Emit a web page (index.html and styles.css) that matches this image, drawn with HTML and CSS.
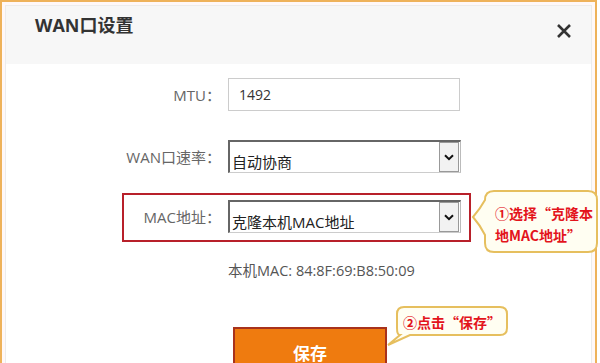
FILE: index.html
```html
<!DOCTYPE html>
<html lang="zh-CN">
<head>
  <meta charset="UTF-8">
  <meta name="viewport" content="width=device-width, initial-scale=1.0">
  <title>WAN口设置</title>
  <link rel="stylesheet" href="styles.css">
</head>
<body>
  <div class="page">
    <div class="dialog">
      <div class="panel">
        <div class="dialog-head">
          <h1 class="dialog-title">WAN口设置</h1>
          <svg class="close" width="16" height="16" viewBox="0 0 16 16">
            <path d="M2 2 L14 14 M14 2 L2 14" stroke="#333" stroke-width="2.6" fill="none"/>
          </svg>
        </div>

        <div class="form">
          <div class="row">
            <label class="row-label">MTU：</label>
            <input type="text" class="text-input" value="1492">
          </div>

          <div class="row row-gap">
            <label class="row-label">WAN口速率：</label>
            <div class="select-box">
              <select class="select">
                <option>自动协商</option>
              </select>
              <span class="select-arrow">
                <svg width="10" height="7" viewBox="0 0 10 7"><path d="M1 1.2 L5 5.2 L9 1.2" stroke="#111" stroke-width="2" fill="none"/></svg>
              </span>
            </div>
          </div>

          <div class="row highlight">
            <label class="row-label">MAC地址：</label>
            <div class="select-box">
              <select class="select">
                <option>克隆本机MAC地址</option>
              </select>
              <span class="select-arrow">
                <svg width="10" height="7" viewBox="0 0 10 7"><path d="M1 1.2 L5 5.2 L9 1.2" stroke="#111" stroke-width="2" fill="none"/></svg>
              </span>
            </div>
          </div>

          <p class="mac-info">本机MAC: 84:8F:69:B8:50:09</p>

          <button class="save">保存</button>
        </div>
      </div>
    </div>

    <div class="callout callout-mac">
      <svg class="callout-shape" width="130" height="65" viewBox="0 0 130 65">
        <path d="M24 2 H118 Q127 2 127 11 V54 Q127 63 118 63 H24 Q15 63 15 54 V46 Q10 36 3 28 Q10 20 15 11 Q15 2 24 2 Z" fill="#fffef2" stroke="#e6bf5e" stroke-width="2"/>
      </svg>
      <div class="callout-text">①选择“克隆本<br>地MAC地址”</div>
    </div>

    <div class="callout callout-save">
      <svg class="callout-shape" width="126" height="44" viewBox="0 0 126 44">
        <path d="M20 2 H116 Q123 2 123 9 V23 Q123 30 116 30 H26 L4 40 L16 30 Q13 30 13 23 V9 Q13 2 20 2 Z" fill="#fffef2" stroke="#e6bf5e" stroke-width="2"/>
      </svg>
      <div class="callout-text">②点击“保存”</div>
    </div>
  </div>
</body>
</html>
```

FILE: styles.css
```css
body {
  margin: 0;
  font-family: "Open Sans", "Noto Sans CJK SC", sans-serif;
  background-color: #fff;
}

.page {
  position: relative;
  width: 600px;
  height: 363px;
  overflow: hidden;
}

.dialog {
  width: 597px;
  height: 380px;
  box-sizing: border-box;
  border: 2px solid #eeb25a;
  padding: 3px 3px 0;
  background: #fff8f8;
}

.panel {
  height: 100%;
  border: 1px solid #ececec;
  background: #fff;
}

.dialog-head {
  height: 58px;
  box-sizing: border-box;
  background: #f7f7f7;
  display: flex;
  justify-content: space-between;
  align-items: flex-start;
  padding: 7px 19px 0 29px;
}

.dialog-title {
  margin: 0;
  font-size: 18px;
  line-height: 24px;
  font-weight: bold;
  color: #333;
}

.close {
  margin-top: 10px;
}

.form {
  padding-top: 14px;
}

.row {
  display: flex;
  align-items: center;
  margin-left: 104px;
}

.row-gap {
  margin-top: 29px;
}

.row-label {
  width: 111px;
  margin-right: 7px;
  text-align: right;
  white-space: nowrap;
  font-size: 15px;
  color: #666;
}

.text-input {
  width: 232px;
  height: 33px;
  box-sizing: border-box;
  border: 1px solid #ccc;
  padding: 0 10px;
  font-family: inherit;
  font-size: 14px;
  color: #333;
}

.select-box {
  display: flex;
  align-items: center;
  width: 233px;
  height: 33px;
  box-sizing: border-box;
  border-top: 2px solid #666;
  border-left: 2px solid #666;
  border-right: 1px solid #bbb;
  border-bottom: 1px solid #ccc;
  background: #fff;
}

.select {
  flex: 1;
  height: 100%;
  appearance: none;
  border: none;
  outline: none;
  background: transparent;
  padding: 10px 0 0 2px;
  font-family: inherit;
  font-size: 15px;
  color: #222;
}

.select-arrow {
  display: flex;
  align-items: center;
  justify-content: center;
  width: 20px;
  height: 30px;
  box-sizing: border-box;
  margin-right: 1px;
  border: 1px solid #999;
  background: #f2f2f2;
}

.highlight {
  margin-top: 20px;
  margin-left: 116px;
  width: 349px;
  box-sizing: border-box;
  border: 2px solid #b8202a;
  padding: 5px 8px 7px 0;
}

  .highlight .row-label {
    width: 97px;
  }

.mac-info {
  margin: 19px 0 0 222px;
  font-size: 14.5px;
  line-height: 20px;
  color: #555;
}

.save {
  display: block;
  margin: 46px 0 0 227px;
  width: 154px;
  height: 50px;
  border: 2px solid #a8321c;
  background: #ef7b0f;
  color: #fff;
  font-family: inherit;
  font-size: 17px;
  font-weight: bold;
}

.callout {
  position: absolute;
}

.callout-shape {
  position: absolute;
  left: 0;
  top: 0;
}

.callout-text {
  position: relative;
  font-family: "Noto Sans CJK SC", sans-serif;
  font-size: 14px;
  font-weight: bold;
  line-height: 22px;
  color: #e3141c;
  white-space: nowrap;
}

.callout-mac {
  left: 470px;
  top: 189px;
  width: 130px;
  height: 65px;
}

  .callout-mac .callout-text {
    padding: 13px 0 0 25px;
  }

.callout-save {
  left: 384px;
  top: 305px;
  width: 126px;
  height: 44px;
}

  .callout-save .callout-text {
    padding: 6px 0 0 19px;
  }
```
